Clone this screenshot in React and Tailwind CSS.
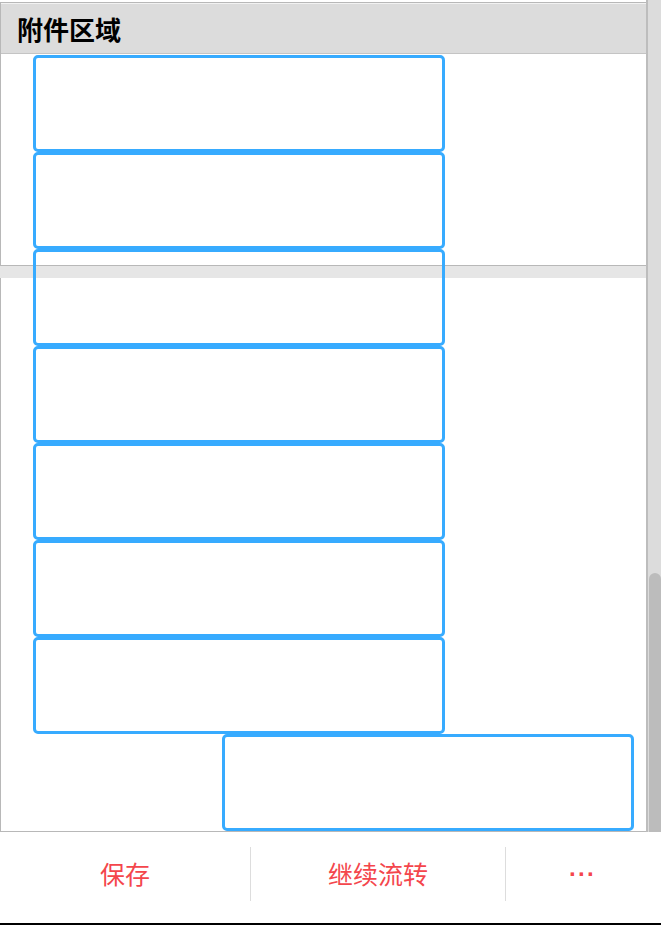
import React from "react";

const cjk = { fontFamily: '"Noto Sans CJK SC", "Noto Sans", sans-serif' };

function Box({ className = "" }) {
  return (
    <div
      className={
        "relative z-10 h-[97px] w-[412px] shrink-0 rounded-[5px] border-[3px] border-[#37abff] " +
        className
      }
    />
  );
}

export default function App() {
  return (
    <div className="flex h-[925px] w-[661px] flex-col overflow-hidden bg-white" style={cjk}>
      {/* scroll area */}
      <div className="flex h-[832px] shrink-0">
        <div className="flex w-[646px] flex-col overflow-hidden pt-[2px]">
          {/* section 1 */}
          <div className="flex h-[264px] shrink-0 flex-col border-l border-t border-b border-[#b8b8b8]">
            <div className="flex h-[51px] shrink-0 items-center border-t border-b border-t-[#f2f2f2] border-b-[#c4c4c4] bg-[#dcdcdc] pl-[16px]">
              <span className="text-[26px] font-bold leading-none text-black">附件区域</span>
            </div>
            <div className="flex flex-col pl-[32px] pt-[1px]">
              <Box />
              <Box />
              <Box />
              <Box />
              <Box />
              <Box />
              <Box />
              <Box className="ml-[189px]" />
            </div>
          </div>
          {/* band */}
          <div className="h-[12px] shrink-0 bg-[#e6e6e6]" />
          {/* section 2 */}
          <div className="flex-1 border-l border-b border-[#b8b8b8] bg-white" />
        </div>
        {/* scrollbar */}
        <div className="flex w-[15px] flex-col border-l-2 border-[#bdbdbd] bg-[#dcdcdc] pl-[1px]">
          <div className="h-[573px] shrink-0" />
          <div className="flex-1 rounded-t-[6px] bg-[#bcbcbc]" />
        </div>
      </div>
      {/* bottom bar */}
      <div className="flex h-[93px] shrink-0 items-center border-b-2 border-black bg-white pb-[8px] text-[25px] leading-none text-[#f4464c]">
        <div className="flex w-[250px] items-center justify-center">保存</div>
        <div className="h-[54px] w-px bg-[#dddddd]" />
        <div className="flex w-[254px] items-center justify-center">继续流转</div>
        <div className="h-[54px] w-px bg-[#dddddd]" />
        <div
          className="flex flex-1 items-center justify-center pr-[2px] text-[24px] font-bold tracking-[1px]"
          style={{ fontFamily: '"Liberation Sans", sans-serif' }}
        >
          ···
        </div>
      </div>
    </div>
  );
}
